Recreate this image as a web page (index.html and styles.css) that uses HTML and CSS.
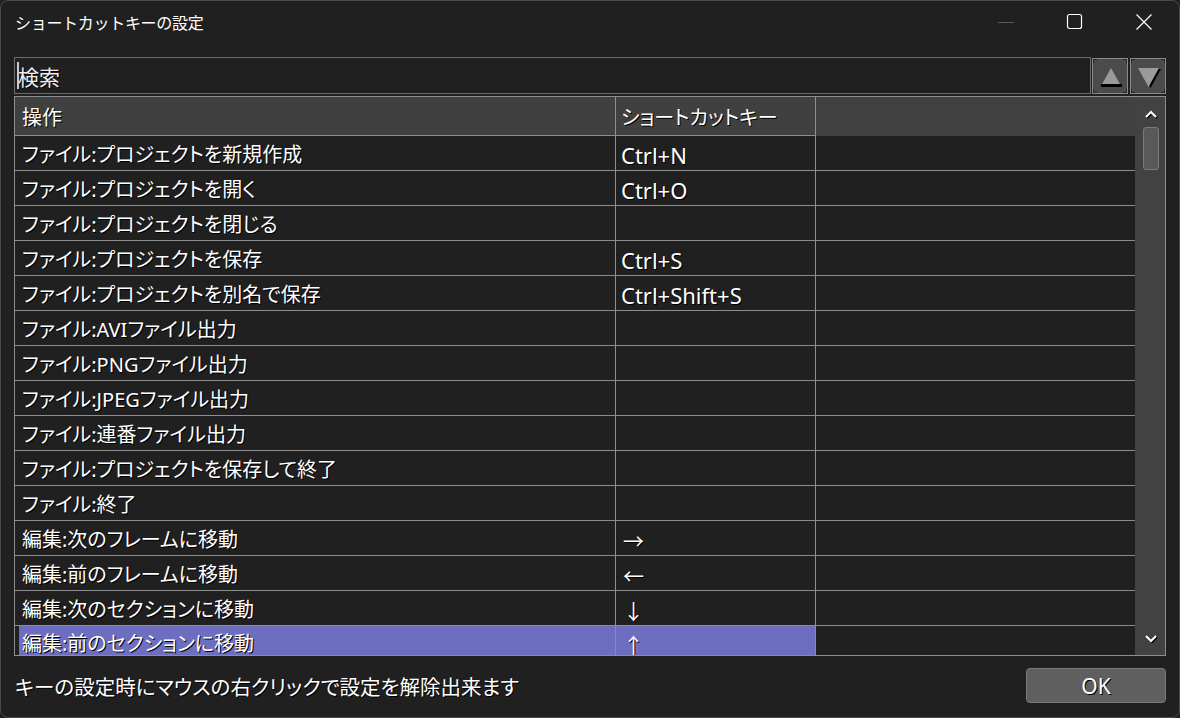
FILE: index.html
```html
<!DOCTYPE html>
<html lang="ja">
<head>
<meta charset="utf-8">
<title>ショートカットキーの設定</title>
<link rel="stylesheet" href="styles.css">
</head>
<body>
<div class="window">
  <div class="titlebar">
    <div class="title">ショートカットキーの設定</div>
    <div class="controls">
      <div class="ctl ctl-min"><svg width="18" height="18" viewBox="0 0 18 18"><line x1="1" y1="9.5" x2="17" y2="9.5" stroke="#5c5c5c" stroke-width="1"/></svg></div>
      <div class="ctl ctl-max"><svg width="18" height="18" viewBox="0 0 18 18"><rect x="1.5" y="1.5" width="14" height="14" rx="2" fill="none" stroke="#ffffff" stroke-width="1.2"/></svg></div>
      <div class="ctl ctl-close"><svg width="18" height="18" viewBox="0 0 18 18"><path d="M1.5 1.5 L16.5 16.5 M16.5 1.5 L1.5 16.5" stroke="#ffffff" stroke-width="1.2"/></svg></div>
    </div>
  </div>

  <div class="search-row">
    <div class="search-box"><span class="caret"></span><span class="search-text">検索</span></div>
    <div class="nav-btn nav-up">
      <span class="corner tl"></span><span class="corner tr"></span><span class="corner bl"></span><span class="corner br"></span>
      <svg width="34" height="34" viewBox="0 0 34 34"><polygon points="8,27 18,9 28,27" fill="#9a9a9a"/><rect x="8" y="25" width="21" height="3" fill="#000"/></svg>
    </div>
    <div class="nav-btn nav-down">
      <span class="corner tl"></span><span class="corner tr"></span><span class="corner bl"></span><span class="corner br"></span>
      <svg width="34" height="34" viewBox="0 0 34 34"><polygon points="9,10 30,10 19.5,29" fill="#000"/><polygon points="7,9 28,9 17.5,28" fill="#9a9a9a"/></svg>
    </div>
  </div>

  <div class="table">
    <div class="grid">
      <div class="row head">
        <div class="cell c1">操作</div>
        <div class="cell c2">ショートカットキー</div>
        <div class="cell c3"></div>
      </div>
      <div class="row"><div class="cell c1">ファイル:プロジェクトを新規作成</div><div class="cell c2">Ctrl+N</div><div class="cell c3"></div></div>
      <div class="row"><div class="cell c1">ファイル:プロジェクトを開く</div><div class="cell c2">Ctrl+O</div><div class="cell c3"></div></div>
      <div class="row"><div class="cell c1">ファイル:プロジェクトを閉じる</div><div class="cell c2"></div><div class="cell c3"></div></div>
      <div class="row"><div class="cell c1">ファイル:プロジェクトを保存</div><div class="cell c2">Ctrl+S</div><div class="cell c3"></div></div>
      <div class="row"><div class="cell c1">ファイル:プロジェクトを別名で保存</div><div class="cell c2">Ctrl+Shift+S</div><div class="cell c3"></div></div>
      <div class="row"><div class="cell c1">ファイル:AVIファイル出力</div><div class="cell c2"></div><div class="cell c3"></div></div>
      <div class="row"><div class="cell c1">ファイル:PNGファイル出力</div><div class="cell c2"></div><div class="cell c3"></div></div>
      <div class="row"><div class="cell c1">ファイル:JPEGファイル出力</div><div class="cell c2"></div><div class="cell c3"></div></div>
      <div class="row"><div class="cell c1">ファイル:連番ファイル出力</div><div class="cell c2"></div><div class="cell c3"></div></div>
      <div class="row"><div class="cell c1">ファイル:プロジェクトを保存して終了</div><div class="cell c2"></div><div class="cell c3"></div></div>
      <div class="row"><div class="cell c1">ファイル:終了</div><div class="cell c2"></div><div class="cell c3"></div></div>
      <div class="row"><div class="cell c1">編集:次のフレームに移動</div><div class="cell c2 arrow">→</div><div class="cell c3"></div></div>
      <div class="row"><div class="cell c1">編集:前のフレームに移動</div><div class="cell c2 arrow">←</div><div class="cell c3"></div></div>
      <div class="row"><div class="cell c1">編集:次のセクションに移動</div><div class="cell c2 arrow">↓</div><div class="cell c3"></div></div>
      <div class="row selected"><div class="cell c1">編集:前のセクションに移動</div><div class="cell c2 arrow">↑</div><div class="cell c3"></div></div>
    </div>
    <div class="vscroll">
      <div class="chev chev-up"><svg width="16" height="10" viewBox="0 0 16 10"><path d="M3 8 L8 3 L13 8" fill="none" stroke="#000" stroke-width="2" transform="translate(1,1)"/><path d="M3 8 L8 3 L13 8" fill="none" stroke="#fff" stroke-width="2"/></svg></div>
      <div class="thumb"></div>
      <div class="track"></div>
      <div class="chev chev-down"><svg width="16" height="10" viewBox="0 0 16 10"><path d="M3 2 L8 7 L13 2" fill="none" stroke="#000" stroke-width="2" transform="translate(1,1)"/><path d="M3 2 L8 7 L13 2" fill="none" stroke="#fff" stroke-width="2"/></svg></div>
    </div>
  </div>

  <div class="footer">
    <div class="hint">キーの設定時にマウスの右クリックで設定を解除出来ます</div>
    <div class="ok-btn">OK</div>
  </div>
</div>
</body>
</html>
```

FILE: styles.css
```css
* { box-sizing: border-box; }
html, body { margin: 0; padding: 0; background: #202020; }
body {
  font-family: "Noto Sans", "Noto Sans CJK JP", sans-serif;
  color: #ffffff;
}
.window {
  width: 1180px;
  height: 718px;
  background: #202020;
  border: 1px solid #4a4a4a;
  border-radius: 8px;
  padding: 0 13px 14px 13px;
  display: flex;
  flex-direction: column;
  overflow: hidden;
}

/* title bar */
.titlebar {
  height: 44px;
  display: flex;
  align-items: center;
  justify-content: space-between;
}
.title {
  font-family: "Noto Sans CJK JP", sans-serif;
  font-size: 16px;
  letter-spacing: -0.3px;
  color: #ffffff;
  padding-left: 1px;
  margin-top: -2px;
}
.controls { display: flex; align-items: center; margin-top: -2px; margin-right: 0; }
.ctl { width: 18px; height: 18px; display: flex; }
.ctl-min { margin-right: 51px; }
.ctl-max { margin-right: 51px; }
.ctl-close { margin-right: 13px; }

/* search row */
.search-row {
  margin-top: 12px;
  height: 37px;
  display: flex;
}
.search-box {
  flex: 1;
  border: 1px solid #6c6c6c;
  display: flex;
  align-items: center;
  padding-left: 2px;
}
.caret {
  width: 2px;
  height: 27px;
  background: #c8c8c8;
  margin-right: -1px;
}
.search-text {
  font-family: "Noto Sans CJK JP", sans-serif;
  font-size: 21px;
  color: #eeeeee;
  text-shadow: 1px 1px 0 #000;
  margin-top: 1px;
}
.nav-btn {
  width: 36px;
  height: 36px;
  margin-top: 1px;
  background: #4b4b4b;
  border: 1px solid #8a8a8a;
  position: relative;
  display: flex;
  align-items: center;
  justify-content: center;
}
.nav-up { margin-left: 1px; }
.nav-down { margin-left: 2px; }
.nav-btn svg { display: block; }
.corner { position: absolute; width: 4px; height: 4px; border-color: #262626; border-style: solid; border-width: 0; }
.corner.tl { top: 0; left: 0; border-top-width: 1px; border-left-width: 1px; }
.corner.tr { top: 0; right: 0; border-top-width: 1px; border-right-width: 1px; }
.corner.bl { bottom: 0; left: 0; border-bottom-width: 1px; border-left-width: 1px; }
.corner.br { bottom: 0; right: 0; border-bottom-width: 1px; border-right-width: 1px; }

/* table */
.table {
  margin-top: 2px;
  height: 561px;
  border: 1px solid #8e8e8e;
  display: flex;
  overflow: hidden;
}
.grid {
  flex: 1;
  overflow: hidden;
  display: flex;
  flex-direction: column;
}
.row {
  display: flex;
  height: 35px;
  flex-shrink: 0;
}
.cell {
  height: 35px;
  border-bottom: 1px solid #8e8e8e;
  font-family: "Noto Sans", "Noto Sans CJK JP", sans-serif;
  font-feature-settings: "palt";
  font-size: 20px;
  line-height: 34px;
  padding-top: 2px;
  color: #ffffff;
  text-shadow: 1px 1px 0 #000;
  white-space: nowrap;
  overflow: hidden;
}
.c1 { width: 601px; border-right: 1px solid #8e8e8e; padding-left: 7px; }
.c2 { width: 200px; border-right: 1px solid #8e8e8e; padding-left: 5px; font-size: 22px; }
.c3 { flex: 1; }
.arrow { font-family: "Noto Sans CJK JP", sans-serif; font-size: 21px; padding-left: 7px; }
.row.head { height: 39px; }
.row.head .cell {
  height: 39px;
  background: #404040;
  line-height: 37px;
  padding-top: 2px;
  font-size: 20px;
}
.row.head .c3 { border-bottom: none; background: #414141; }
.row.selected .cell { padding-top: 1px; }
.row.selected .c1 { background: #6e6ec1; box-shadow: inset 4px 0 0 #202020; }
.row.selected .c2 { background: #6e6ec1; }

/* scrollbar */
.vscroll {
  width: 30px;
  background: #424242;
  display: flex;
  flex-direction: column;
  align-items: center;
}
.chev { height: 30px; display: flex; align-items: center; justify-content: center; padding-left: 1px; }
.chev-up { padding-top: 4px; }
.chev-down { padding-bottom: 2px; }
.thumb {
  width: 16px;
  height: 43px;
  background: #595959;
  border: 1px solid #7a7a7a;
  border-radius: 3px;
  margin-left: 1px;
}
.track { flex: 1; }

/* footer */
.footer {
  margin-top: 12px;
  height: 35px;
  display: flex;
  align-items: center;
  justify-content: space-between;
}
.hint {
  font-family: "Noto Sans CJK JP", sans-serif;
  font-feature-settings: "palt";
  font-size: 20.5px;
  color: #ffffff;
  text-shadow: 1px 1px 0 #000;
  padding-left: 1px;
}
.ok-btn {
  width: 140px;
  height: 35px;
  background: #5f5f5f;
  border: 1px solid #7a7a7a;
  border-radius: 4px;
  display: flex;
  align-items: center;
  justify-content: center;
  font-family: "Noto Sans", sans-serif;
  font-size: 21px;
  color: #ffffff;
  text-shadow: 1px 1px 0 #000;
}
```
